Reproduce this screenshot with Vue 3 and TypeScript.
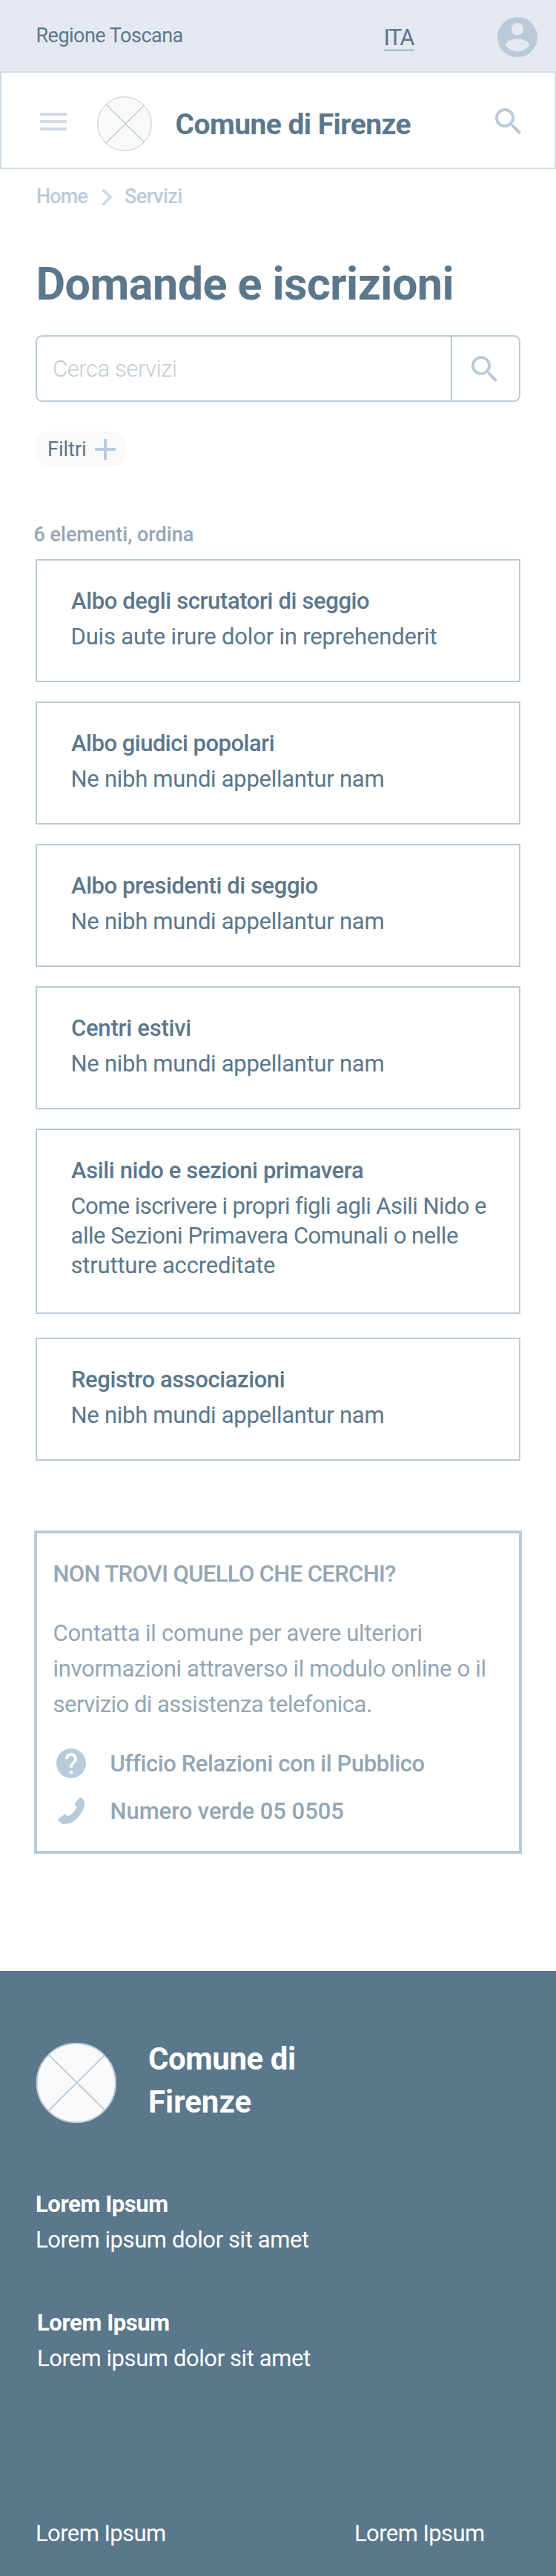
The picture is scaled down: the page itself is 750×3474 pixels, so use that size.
<script setup lang="ts">
interface Line { text: string; tracking: number }
interface Service { title: Line; description: Line[] }

const line = (text: string, tracking: number): Line => ({ text, tracking })

const services: Service[] = [
  { title: line('Albo degli scrutatori di seggio', -0.38), description: [line('Duis aute irure dolor in reprehenderit', -0.18)] },
  { title: line('Albo giudici popolari', -0.5), description: [line('Ne nibh mundi appellantur nam', -0.28)] },
  { title: line('Albo presidenti di seggio', -0.42), description: [line('Ne nibh mundi appellantur nam', -0.28)] },
  { title: line('Centri estivi', -0.24), description: [line('Ne nibh mundi appellantur nam', -0.28)] },
  {
    title: line('Asili nido e sezioni primavera', -0.37),
    description: [
      line('Come iscrivere i propri figli agli Asili Nido e', -0.57),
      line('alle Sezioni Primavera Comunali o nelle', -0.46),
      line('strutture accreditate', -0.2),
    ],
  },
  { title: line('Registro associazioni', -0.42), description: [line('Ne nibh mundi appellantur nam', -0.28)] },
]

const helpText: Line[] = [
  line('Contatta il comune per avere ulteriori', -0.26),
  line('invormazioni attraverso il modulo online o il', -0.31),
  line('servizio di assistenza telefonica.', -0.52),
]

const searchPath =
  'M15.5 14h-.79l-.28-.27C15.41 12.59 16 11.11 16 9.5 16 5.91 13.09 3 9.5 3S3 5.91 3 9.5 5.91 16 9.5 16c1.61 0 3.09-.59 4.23-1.57l.27.28v.79l5 4.99L20.49 19l-4.99-5zm-6 0C7.01 14 5 11.99 5 9.5S7.01 5 9.5 5 14 7.01 14 9.5 11.99 14 9.5 14z'

const spacing = (l: Line) => ({ letterSpacing: `${l.tracking}px` })
</script>

<template>
  <div class="page">
    <div class="topbar">
      <span class="region">Regione Toscana</span>
      <a class="lang">ITA</a>
      <svg class="user" viewBox="2 2 20 20">
        <path d="M12 2C6.48 2 2 6.48 2 12s4.48 10 10 10 10-4.48 10-10S17.52 2 12 2zm0 3c1.66 0 3 1.34 3 3s-1.34 3-3 3-3-1.34-3-3 1.34-3 3-3zm0 14.2c-2.5 0-4.71-1.28-6-3.22.03-1.99 4-3.08 6-3.08 1.99 0 5.97 1.09 6 3.08-1.29 1.94-3.5 3.22-6 3.22z" />
      </svg>
    </div>

    <header class="header">
      <div class="menu"><i></i><i></i><i></i></div>
      <svg class="crest" viewBox="0 0 74 74">
        <circle cx="37" cy="37" r="36.3" />
        <path d="M12.3 11.2 63.7 62.3M63.3 12 12.3 62.5" />
      </svg>
      <span class="brand">Comune di Firenze</span>
      <svg class="search-icon" viewBox="0 0 24 24"><path :d="searchPath" /></svg>
    </header>

    <main class="main">
      <nav class="crumbs">
        <a class="home">Home</a>
        <svg class="chevron" viewBox="0 0 15 24"><path d="M1.6 1.6 12 12 1.6 22.4" /></svg>
        <a class="current">Servizi</a>
      </nav>

      <h1 class="title">Domande e iscrizioni</h1>

      <div class="search">
        <span class="placeholder">Cerca servizi</span>
        <div class="search-button">
          <svg class="search-icon" viewBox="0 0 24 24"><path :d="searchPath" /></svg>
        </div>
      </div>

      <div class="chip">
        <span>Filtri</span>
        <svg class="plus" viewBox="0 0 28 28"><path d="M12 0h4v12h12v4H16v12h-4V16H0v-4h12z" /></svg>
      </div>

      <p class="count">6 elementi, ordina</p>

      <div class="cards">
        <article
          v-for="s in services"
          :key="s.title.text"
          class="card"
          :class="{ tall: s.description.length > 1 }"
        >
          <h2 class="card-title" :style="spacing(s.title)">{{ s.title.text }}</h2>
          <p class="card-text">
            <span v-for="l in s.description" :key="l.text" :style="spacing(l)">{{ l.text }}</span>
          </p>
        </article>
      </div>

      <section class="help">
        <h3 class="help-title">NON TROVI QUELLO CHE CERCHI?</h3>
        <p class="help-text">
          <span v-for="l in helpText" :key="l.text" :style="spacing(l)">{{ l.text }}</span>
        </p>
        <div class="contact">
          <svg class="question" viewBox="2 2 20 20">
            <path d="M12 2C6.48 2 2 6.48 2 12s4.48 10 10 10 10-4.48 10-10S17.52 2 12 2zm1 17h-2v-2h2v2zm2.07-7.75l-.9.92C13.45 12.9 13 13.5 13 15h-2v-.5c0-1.1.45-2.1 1.17-2.83l1.24-1.26c.37-.36.59-.86.59-1.41 0-1.1-.9-2-2-2s-2 .9-2 2H8c0-2.21 1.79-4 4-4s4 1.79 4 4c0 .88-.36 1.68-.93 2.25z" />
          </svg>
          <span class="office">Ufficio Relazioni con il Pubblico</span>
        </div>
        <div class="contact">
          <svg class="phone" viewBox="0 0 36 36">
            <path d="M31 0 Q32.5 0 33.5 1.5 L35.6 5 Q36 6 36 8 C36 16 31 24 24 30 C19 34.5 13 36 9 36 Q6.5 36.3 5.3 35.2 L1 31.5 Q-0.5 29.5 1 28.5 L8.5 23 Q10 22 11 23 L13.5 25.2 Q16 25 20 21 Q25 16 25.3 12.7 L23.3 10.8 Q22.5 9.5 23.2 8 L28.5 0.9 Q29.3 0 31 0 Z" />
          </svg>
          <span class="toll-free">Numero verde 05 0505</span>
        </div>
      </section>
    </main>

    <footer class="footer">
      <div class="footer-brand">
        <svg class="footer-crest" viewBox="0 0 110 110">
          <circle cx="54.8" cy="55" r="53.2" />
          <path d="M18 17.5 93 91.5M92.5 18 18 92" />
        </svg>
        <div class="footer-name"><span class="first">Comune di</span><span>Firenze</span></div>
      </div>
      <div class="block">
        <strong>Lorem Ipsum</strong>
        <span>Lorem ipsum dolor sit amet</span>
      </div>
      <div class="block shifted">
        <strong>Lorem Ipsum</strong>
        <span>Lorem ipsum dolor sit amet</span>
      </div>
      <div class="links">
        <a>Lorem Ipsum</a>
        <a>Lorem Ipsum</a>
      </div>
    </footer>
  </div>
</template>

<style>
body {
  margin: 0;
  background: #fff;
}
</style>

<style scoped>
.page {
  width: 750px;
  height: 3474px;
  display: flex;
  flex-direction: column;
  overflow: hidden;
  font-family: Roboto, 'Open Sans', sans-serif;
  font-size: 31px;
  color: #5b778b;
  white-space: nowrap;
  background: #fff;
}
.page * {
  box-sizing: border-box;
}
h1, h2, h3, p {
  margin: 0;
}
svg {
  display: block;
  flex: none;
  fill: #b9cbd9;
}

.topbar {
  height: 96px;
  flex: none;
  display: flex;
  align-items: flex-start;
  background: #e4e9f1;
}
.region {
  width: 469px;
  margin: 34px 0 0 48.5px;
  font-size: 27px;
  line-height: 28px;
  letter-spacing: -0.52px;
}
.lang {
  width: 40px;
  margin-top: 35px;
  line-height: 32px;
  letter-spacing: -1.8px;
  border-bottom: 1px solid #5b778b;
}
.user {
  width: 54px;
  height: 54px;
  margin: 23px 0 0 113.5px;
}

.header {
  height: 132px;
  flex: none;
  display: flex;
  align-items: flex-start;
  border: 2px solid #cedbe6;
}
.menu {
  width: 36px;
  margin: 54px 0 0 52px;
  display: flex;
  flex-direction: column;
  gap: 6px;
}
.menu i {
  height: 4px;
  background: #cedbe6;
}
.crest {
  width: 74px;
  height: 74px;
  margin: 31.5px 0 0 41px;
}
.crest circle,
.footer-crest circle {
  fill: #f9f9f9;
  stroke: #b9cbd9;
}
.crest path,
.footer-crest path {
  fill: none;
  stroke: #b9cbd9;
  stroke-width: 1.3;
}
.brand {
  width: 425.5px;
  margin: 46px 0 0 31.5px;
  font-size: 39px;
  font-weight: 700;
  line-height: 48px;
  letter-spacing: -0.55px;
}
.search-icon {
  width: 48px;
  height: 48px;
}
.header .search-icon {
  margin-top: 42px;
}

.main {
  flex: none;
  height: 2430px;
  padding: 23px 46px 0;
}
.crumbs {
  display: flex;
  height: 28px;
  padding-left: 3px;
  font-size: 27px;
  font-weight: 500;
  line-height: 28px;
  color: #b9cbd9;
}
.home {
  width: 88px;
  letter-spacing: -0.9px;
}
.chevron {
  width: 15px;
  height: 24px;
  margin: 3px 16px 0 0;
}
.chevron path {
  fill: none;
  stroke: #cedbe6;
  stroke-width: 4;
}
.current {
  letter-spacing: -0.5px;
}
.title {
  margin: 68px 0 0 2.5px;
  font-size: 61px;
  font-weight: 700;
  line-height: 72px;
  letter-spacing: -0.52px;
}
.search {
  display: flex;
  justify-content: space-between;
  height: 90px;
  margin: 33px 2px 0;
  border: 2px solid #b9cbd9;
  border-radius: 9px;
}
.placeholder {
  padding: 20px 0 0 21px;
  font-weight: 300;
  line-height: 48px;
  letter-spacing: -0.41px;
  color: #c3ccd3;
}
.search-button {
  width: 92px;
  display: flex;
  padding: 20px 0 0 20px;
  border-left: 2px solid #b9cbd9;
}
.chip {
  display: flex;
  justify-content: space-between;
  width: 122px;
  height: 48px;
  margin: 40px 0 0 2px;
  padding: 10px 14px 0 16px;
  font-size: 27px;
  line-height: 28px;
  border-radius: 18px;
  background: #f9f9f9;
}
.plus {
  width: 28px;
  height: 28px;
}
.count {
  margin: 75px 0 0 -0.5px;
  font-size: 27px;
  font-weight: 500;
  line-height: 32px;
  color: #94a6b4;
}

.cards {
  display: flex;
  flex-direction: column;
  gap: 26px;
  margin: 17px 2px 0;
}
.card {
  height: 166px;
  padding: 31px 0 0 46px;
  border: 2px solid #b9cbd9;
}
.card.tall {
  height: 250px;
  margin-bottom: 6px;
}
.card-title {
  font-size: 31px;
  font-weight: 500;
  line-height: 48px;
}
.card-text {
  margin: 4px 0 0 -0.5px;
  line-height: 40px;
}
.card-text span,
.help-text span {
  display: block;
}

.help {
  height: 436px;
  margin-top: 94px;
  padding: 31.4px 0 0 21.5px;
  border: 4px solid #b9cbd9;
  color: #94a6b4;
}
.help-title {
  font-size: 31px;
  font-weight: 500;
  line-height: 48px;
  letter-spacing: -0.63px;
}
.help-text {
  margin: 32px 0 36px;
  line-height: 48px;
}
.contact {
  display: flex;
  height: 40px;
  margin-bottom: 24px;
  font-weight: 500;
  line-height: 40px;
}
.question {
  width: 40px;
  height: 40px;
  margin: -1.4px 32.5px 0 4.5px;
}
.phone {
  width: 36px;
  height: 36px;
  margin: 0.6px 34.5px 0 6.5px;
}
.office {
  letter-spacing: -0.41px;
}
.toll-free {
  letter-spacing: -0.05px;
}

.footer {
  height: 816px;
  flex: none;
  padding: 90px 48px 0;
  color: #fff;
  background: #5b778b;
}
.footer-brand {
  display: flex;
}
.footer-crest {
  width: 110px;
  height: 110px;
  margin-top: 6px;
}
.footer-crest circle {
  stroke-width: 2;
}
.footer-crest path {
  stroke-width: 1.8;
}
.footer-name {
  display: flex;
  flex-direction: column;
  margin-left: 42px;
  font-size: 42px;
  font-weight: 700;
  line-height: 58px;
}
.first {
  letter-spacing: -0.42px;
}
.block {
  display: flex;
  flex-direction: column;
  margin-top: 85px;
  line-height: 48px;
  letter-spacing: -0.41px;
}
.block strong {
  font-weight: 700;
}
.block.shifted {
  margin: 64px 0 0 2px;
}
.links {
  display: flex;
  margin-top: 188px;
  line-height: 48px;
  letter-spacing: -0.58px;
}
.links a {
  width: 430px;
  flex: none;
}
</style>
